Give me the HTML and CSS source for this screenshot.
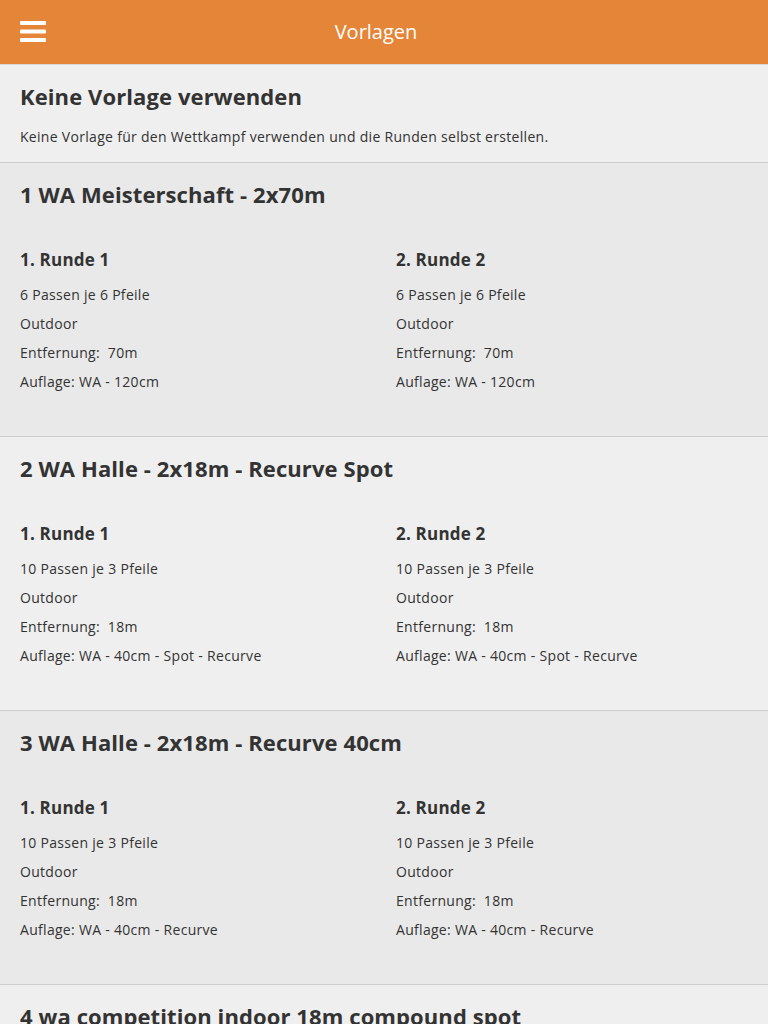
FILE: index.html
```html
<!DOCTYPE html>
<html lang="de">
<head>
<meta charset="utf-8">
<title>Vorlagen</title>
<link rel="stylesheet" href="styles.css">
</head>
<body>
<header class="topbar">
  <button class="menu-btn" aria-label="Menü">
    <svg width="26" height="21" viewBox="0 0 26 21"><rect x="0" y="0" width="26" height="4" rx="1" fill="#fff"/><rect x="0" y="8.5" width="26" height="4" rx="1" fill="#fff"/><rect x="0" y="17" width="26" height="4" rx="1" fill="#fff"/></svg>
  </button>
  <h1 class="topbar-title">Vorlagen</h1>
  <span class="topbar-spacer"></span>
</header>
<main class="list">
  <section class="item item-light">
    <h2 class="item-title">Keine Vorlage verwenden</h2>
    <p class="item-desc">Keine Vorlage für den Wettkampf verwenden und die Runden selbst erstellen.</p>
  </section>

  <section class="item item-dark template">
    <h2 class="item-title">1 WA Meisterschaft - 2x70m</h2>
    <div class="rounds">
      <div class="round">
        <h3 class="round-title">1. Runde 1</h3>
        <p>6 Passen je 6 Pfeile</p>
        <p>Outdoor</p>
        <p>Entfernung:&nbsp; 70m</p>
        <p>Auflage: WA - 120cm</p>
      </div>
      <div class="round">
        <h3 class="round-title">2. Runde 2</h3>
        <p>6 Passen je 6 Pfeile</p>
        <p>Outdoor</p>
        <p>Entfernung:&nbsp; 70m</p>
        <p>Auflage: WA - 120cm</p>
      </div>
    </div>
  </section>

  <section class="item item-light template">
    <h2 class="item-title">2 WA Halle - 2x18m - Recurve Spot</h2>
    <div class="rounds">
      <div class="round">
        <h3 class="round-title">1. Runde 1</h3>
        <p>10 Passen je 3 Pfeile</p>
        <p>Outdoor</p>
        <p>Entfernung:&nbsp; 18m</p>
        <p>Auflage: WA - 40cm - Spot - Recurve</p>
      </div>
      <div class="round">
        <h3 class="round-title">2. Runde 2</h3>
        <p>10 Passen je 3 Pfeile</p>
        <p>Outdoor</p>
        <p>Entfernung:&nbsp; 18m</p>
        <p>Auflage: WA - 40cm - Spot - Recurve</p>
      </div>
    </div>
  </section>

  <section class="item item-dark template">
    <h2 class="item-title">3 WA Halle - 2x18m - Recurve 40cm</h2>
    <div class="rounds">
      <div class="round">
        <h3 class="round-title">1. Runde 1</h3>
        <p>10 Passen je 3 Pfeile</p>
        <p>Outdoor</p>
        <p>Entfernung:&nbsp; 18m</p>
        <p>Auflage: WA - 40cm - Recurve</p>
      </div>
      <div class="round">
        <h3 class="round-title">2. Runde 2</h3>
        <p>10 Passen je 3 Pfeile</p>
        <p>Outdoor</p>
        <p>Entfernung:&nbsp; 18m</p>
        <p>Auflage: WA - 40cm - Recurve</p>
      </div>
    </div>
  </section>

  <section class="item item-light template">
    <h2 class="item-title">4 wa competition indoor 18m compound spot</h2>
    <div class="rounds">
      <div class="round">
        <h3 class="round-title">1. Runde 1</h3>
        <p>10 Passen je 3 Pfeile</p>
        <p>Indoor</p>
        <p>Entfernung:&nbsp; 18m</p>
        <p>Auflage: WA - 40cm - Spot - Compound</p>
      </div>
      <div class="round">
        <h3 class="round-title">2. Runde 2</h3>
        <p>10 Passen je 3 Pfeile</p>
        <p>Indoor</p>
        <p>Entfernung:&nbsp; 18m</p>
        <p>Auflage: WA - 40cm - Spot - Compound</p>
      </div>
    </div>
  </section>
</main>
</body>
</html>
```

FILE: styles.css
```css
* { box-sizing: border-box; }
html, body {
  margin: 0;
  padding: 0;
  background: #efefef;
  font-family: "Open Sans", "Noto Sans", sans-serif;
  color: #333;
}
.topbar {
  height: 65px;
  background: #e58537;
  display: flex;
  align-items: center;
  padding: 0 20px;
  border-bottom: 1px solid #d9d9d9;
}
.menu-btn {
  width: 26px;
  height: 21px;
  padding: 0;
  margin: 0;
  border: 0;
  background: none;
  display: flex;
  flex: 0 0 auto;
  margin-top: -1px;
}
.topbar-title {
  flex: 1;
  margin: 0;
  text-align: center;
  color: #fff;
  font-size: 20px;
  font-weight: 400;
  line-height: 28px;
  padding-right: 16px;
}
.topbar-spacer { width: 26px; flex: 0 0 auto; }
.list { display: flex; flex-direction: column; }
.item {
  padding: 16px 20px 15px;
  border-bottom: 1px solid #cdcdcd;
}
.item-light { background: #efefef; }
.item-dark { background: #e9e9e9; }
.template { padding-bottom: 40px; }
.item-title {
  margin: 0;
  font-size: 22px;
  line-height: 30px;
  font-weight: 700;
  letter-spacing: 0.1px;
  color: #333;
}
.item-desc {
  margin: 16px 0 0;
  font-size: 14px;
  line-height: 20px;
  letter-spacing: 0.3px;
}
.rounds {
  display: grid;
  grid-template-columns: 1fr 1fr;
  column-gap: 24px;
  margin-top: 39px;
}
.round-title {
  margin: 0 0 8px;
  font-size: 17px;
  line-height: 24px;
  font-weight: 700;
  letter-spacing: 0.2px;
}
.round p {
  margin: 0;
  font-size: 14px;
  line-height: 29px;
  letter-spacing: 0.3px;
}
```
